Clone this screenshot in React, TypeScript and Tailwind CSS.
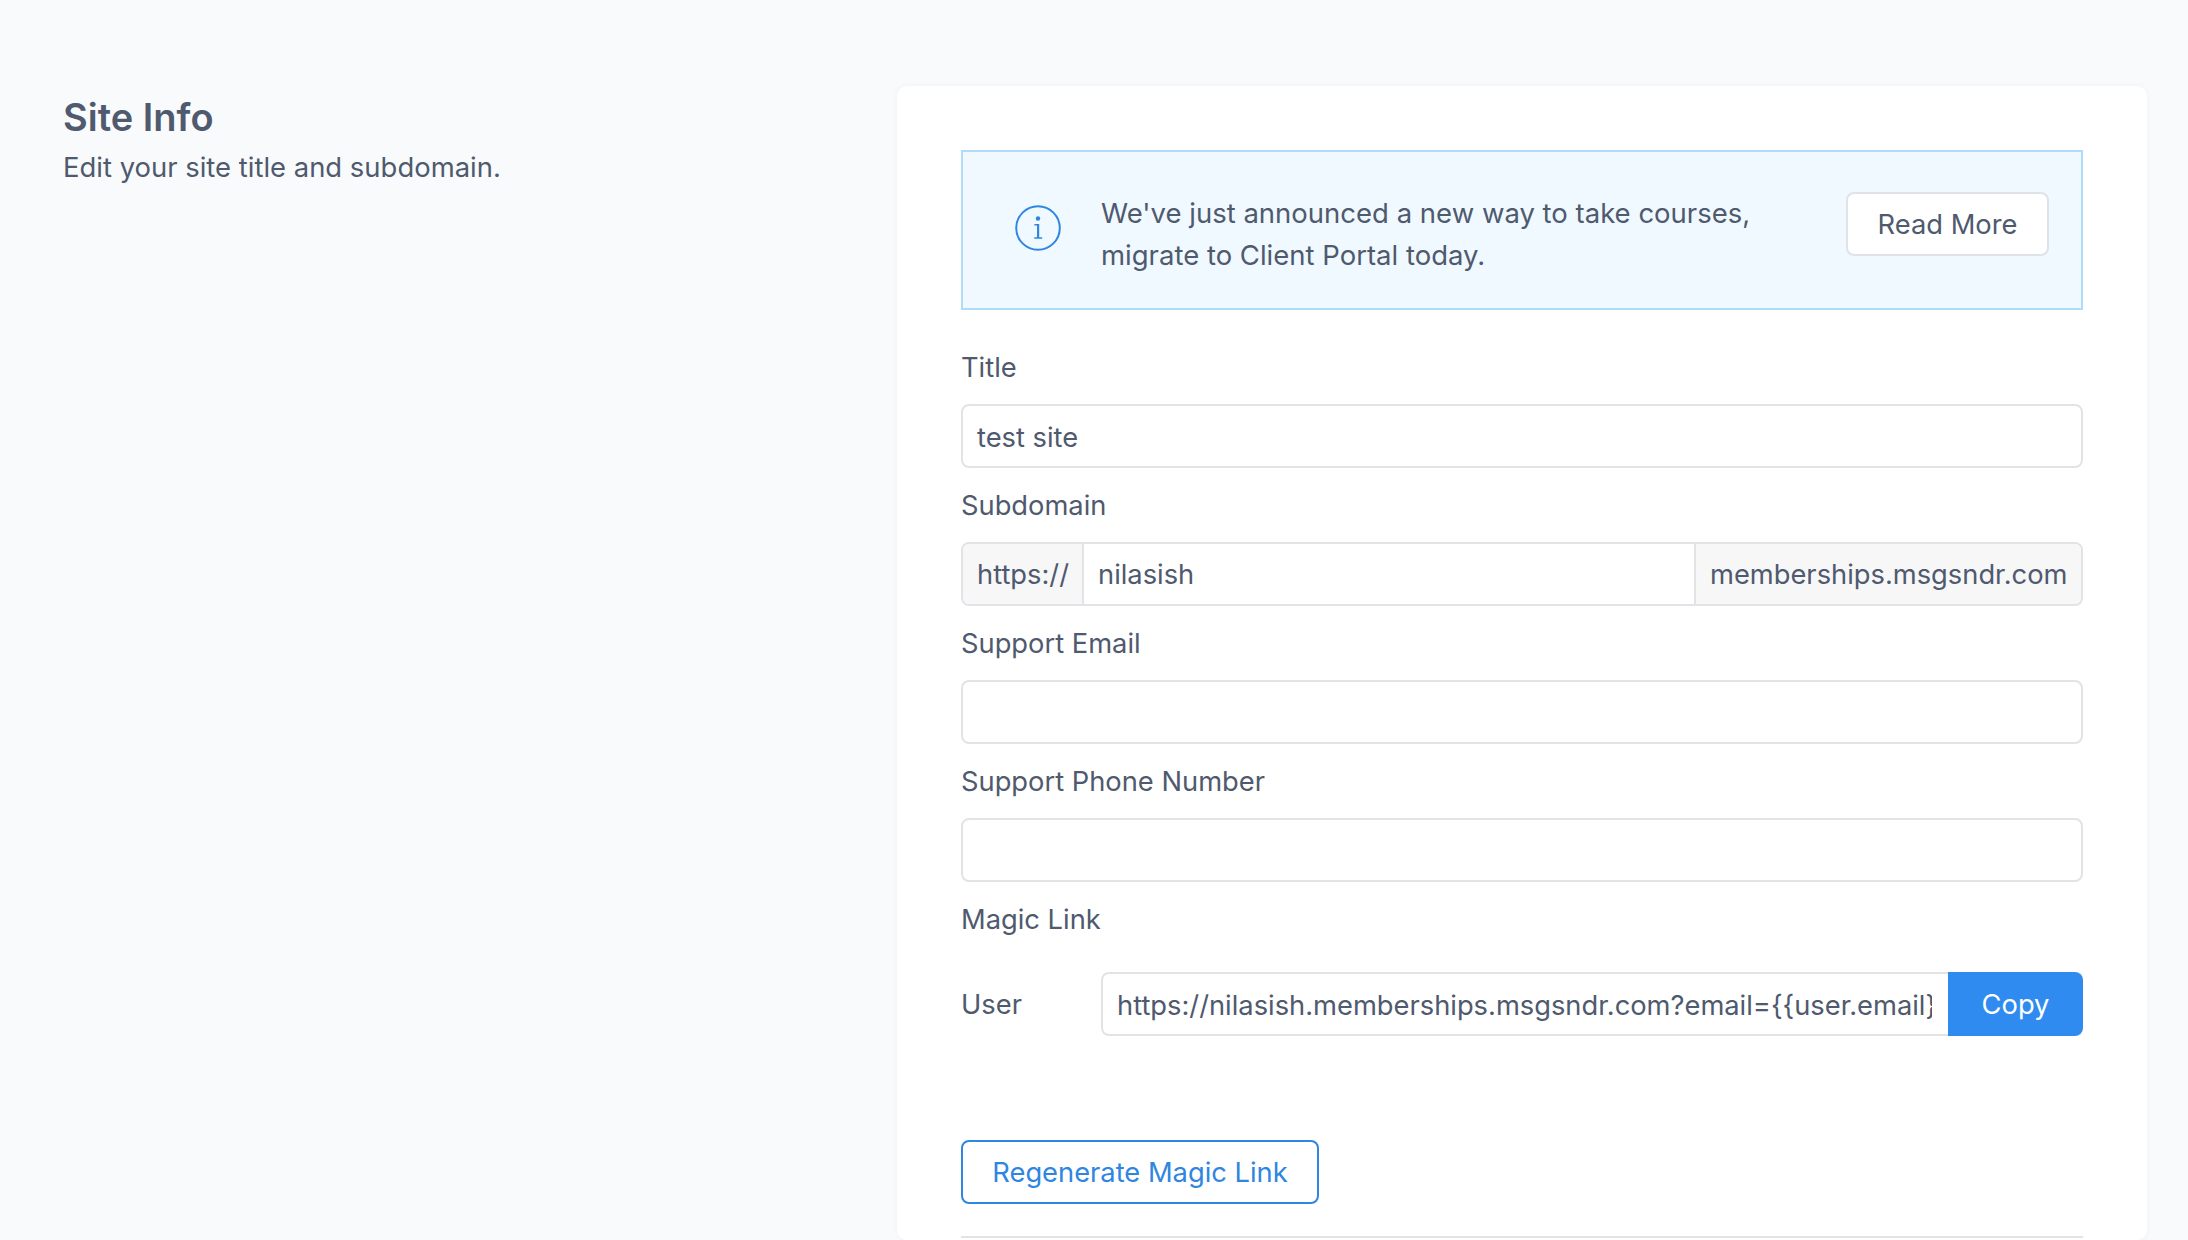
export default function App() {
  const inputCls =
    "block w-full h-[64px] rounded-lg border-2 border-[#e2e3e6] bg-white px-[14px] pt-[2px] text-[27.3px] text-[#4f5a6e] outline-none";
  const labelCls = "block h-[37px] text-[27.3px] leading-[37px] text-[#4f5a6e]";
  return (
    <div className="flex h-screen w-full overflow-hidden bg-[#f9fafc] pt-[86px] pr-[41px] pl-[63px] font-['Inter',sans-serif] text-[#4f5a6e]">
      <div className="w-[834px] shrink-0">
        <h2 className="mt-[8px] text-[38px] leading-[46px] font-semibold text-[#4f5a6e]">Site Info</h2>
        <p className="mt-[6px] text-[27.45px] leading-[42px]">Edit your site title and subdomain.</p>
      </div>
      <div className="flex-1 rounded-[10px] bg-white px-[64px] pt-[64px] shadow-[0_0_6px_rgba(0,0,0,0.04)]">
        <div className="flex h-[160px] items-center border-2 border-[#b0dcf8] bg-[#f0f9ff] pr-[32px]">
          <div className="-mt-[5px] flex w-[138px] shrink-0 justify-center pl-[12px]">
            <svg width="46" height="46" viewBox="0 0 46 46" fill="none">
              <circle cx="23" cy="23" r="21.8" stroke="#2f86e0" strokeWidth="2" />
              <circle cx="23" cy="13.5" r="2.2" fill="#2f86e0" />
              <path d="M19.4 19h4.8v13.2h3v1.6h-8v-1.6h2.8V20.6h-2.6z" fill="#2f86e0" />
            </svg>
          </div>
          <p className="mt-[8px] flex-1 text-[27.5px] leading-[42px] tracking-normal">
            We've just announced a new way to take courses,
            <br />
            migrate to Client Portal today.
          </p>
          <button className="-mt-[12px] h-[64px] w-[203px] rounded-lg border-2 border-[#dfe2e7] bg-white pt-[2px] text-[27.3px] text-[#4f5a6e]">
            Read More
          </button>
        </div>

        <label className="mt-[39px] mb-[18px] block h-[37px] text-[27.3px] leading-[37px]">Title</label>
        <input className={inputCls} readOnly value="test site" />

        <label className={`mt-[19px] mb-[18px] ${labelCls}`}>Subdomain</label>
        <div className="flex h-[64px] overflow-hidden rounded-lg border-2 border-[#e2e3e6] text-[27.3px]">
          <div className="flex w-[121px] shrink-0 items-center border-r-2 border-[#e2e3e6] bg-[#f7f7f8] pt-[2px] pl-[14px]">https://</div>
          <input className="min-w-0 flex-1 bg-white px-[14px] pt-[2px] text-[#4f5a6e] outline-none" readOnly value="nilasish" />
          <div className="flex w-[387px] shrink-0 items-center border-l-2 border-[#e2e3e6] bg-[#f7f7f8] pt-[2px] pl-[14px]">memberships.msgsndr.com</div>
        </div>

        <label className={`mt-[19px] mb-[18px] ${labelCls}`}>Support Email</label>
        <input className={inputCls} readOnly value="" />

        <label className={`mt-[19px] mb-[18px] ${labelCls}`}>Support Phone Number</label>
        <input className={inputCls} readOnly value="" />

        <label className={`mt-[19px] mb-[18px] ${labelCls}`}>Magic Link</label>
        <div className="mt-[34px] flex h-[64px] items-center">
          <span className="w-[140px] shrink-0 pt-[2px] text-[27.3px]">User</span>
          <input
            className="h-full min-w-0 flex-1 rounded-l-lg border-2 border-r-0 border-[#e2e3e6] bg-white pt-[2px] pr-[16px] pl-[14px] text-[27.3px] text-[#4f5a6e] outline-none"
            readOnly
            value="https://nilasish.memberships.msgsndr.com?email={{user.email}}"
          />
          <button className="h-full w-[135px] shrink-0 rounded-r-lg bg-[#2f8bef] pt-[2px] text-[27.3px] text-white">Copy</button>
        </div>

        <button className="mt-[104px] block h-[64px] w-[358px] rounded-lg border-2 border-[#2f86e0] bg-white pt-[2px] text-[27.3px] text-[#2f86e0]">
          Regenerate Magic Link
        </button>
        <div className="mt-[32px] h-[2px] bg-[#e2e3e6]" />
      </div>
    </div>
  );
}
